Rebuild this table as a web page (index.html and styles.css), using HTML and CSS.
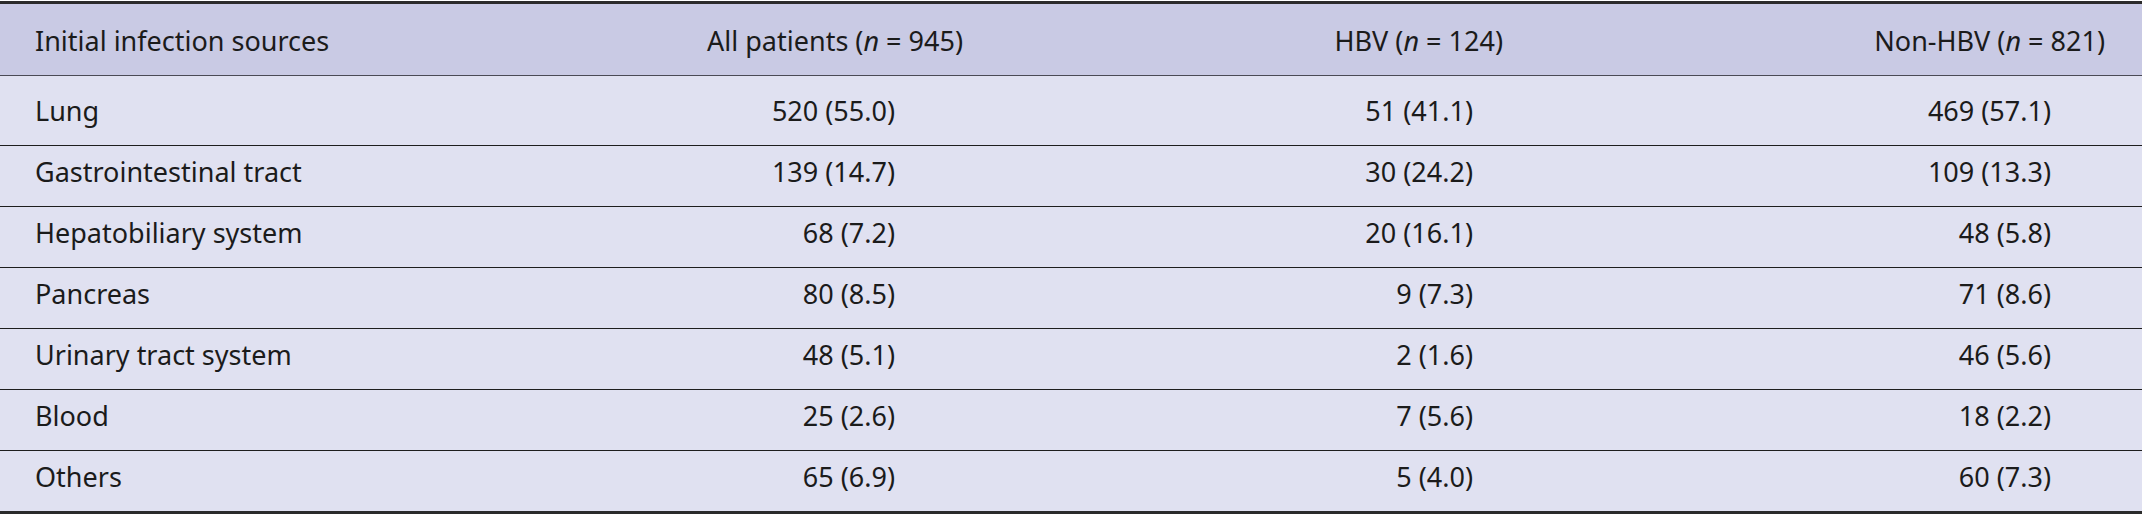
FILE: index.html
```html
<!DOCTYPE html>
<html lang="en">
<head>
<meta charset="utf-8">
<title>Initial infection sources</title>
<link rel="stylesheet" href="styles.css">
</head>
<body>
<table class="data">
  <colgroup>
    <col class="c1"><col class="c2"><col class="c3"><col class="c4">
  </colgroup>
  <thead>
    <tr>
      <th class="lbl">Initial infection sources</th>
      <th>All patients (<i>n</i> = 945)</th>
      <th>HBV (<i>n</i> = 124)</th>
      <th>Non-HBV (<i>n</i> = 821)</th>
    </tr>
  </thead>
  <tbody>
    <tr class="first"><td class="lbl">Lung</td><td>520 (55.0)</td><td>51 (41.1)</td><td>469 (57.1)</td></tr>
    <tr><td class="lbl">Gastrointestinal tract</td><td>139 (14.7)</td><td>30 (24.2)</td><td>109 (13.3)</td></tr>
    <tr><td class="lbl">Hepatobiliary system</td><td>68 (7.2)</td><td>20 (16.1)</td><td>48 (5.8)</td></tr>
    <tr><td class="lbl">Pancreas</td><td>80 (8.5)</td><td>9 (7.3)</td><td>71 (8.6)</td></tr>
    <tr><td class="lbl">Urinary tract system</td><td>48 (5.1)</td><td>2 (1.6)</td><td>46 (5.6)</td></tr>
    <tr><td class="lbl">Blood</td><td>25 (2.6)</td><td>7 (5.6)</td><td>18 (2.2)</td></tr>
    <tr><td class="lbl">Others</td><td>65 (6.9)</td><td>5 (4.0)</td><td>60 (7.3)</td></tr>
  </tbody>
</table>
</body>
</html>
```
FILE: styles.css
```css
html, body {
  margin: 0;
  padding: 0;
  background: #ffffff;
}
body {
  padding-top: 1px;
  font-family: "Noto Sans", "Open Sans", sans-serif;
  font-size: 27px;
  color: #1b1b1b;
}
.data {
  width: 100%;
  table-layout: fixed;
  border-collapse: collapse;
  border-top: 3px solid #2b2b2b;
  border-bottom: 3px solid #2b2b2b;
}
.c1 { width: 580px; }
.c2 { width: 420px; }
.c3 { width: 540px; }
.c4 { width: 602px; }
.data th {
  background: #c9cae4;
  font-weight: normal;
  line-height: 36px;
  padding: 19px 37px 16px 0;
  text-align: right;
  white-space: nowrap;
  border-bottom: 1px solid #4a4a55;
}
.data td {
  background: #e0e1f1;
  line-height: 36px;
  padding: 8px 0 16px 0;
  text-align: right;
  white-space: nowrap;
  border-bottom: 1px solid #1e1e1e;
}
.data tbody tr:last-child td {
  border-bottom: none;
}
.data tr.first td {
  padding-top: 17px;
}
.data th.lbl,
.data td.lbl {
  text-align: left;
  padding-left: 35px;
  padding-right: 0;
}
.data td:nth-child(2) { padding-right: 105px; }
.data td:nth-child(3) { padding-right: 67px; }
.data td:nth-child(4) { padding-right: 91px; }
.data i {
  font-style: italic;
}
```
